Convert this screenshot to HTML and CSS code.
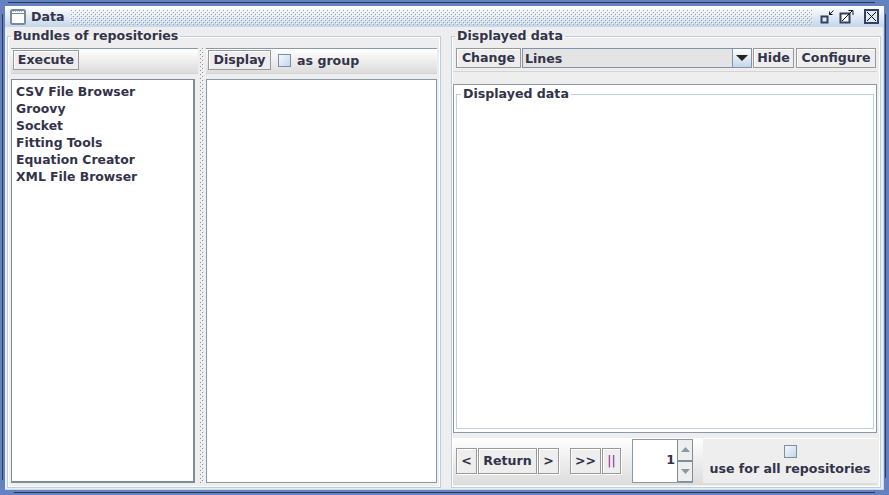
FILE: index.html
```html
<!DOCTYPE html>
<html lang="en">
<head>
<meta charset="utf-8">
<title>Data</title>
<link rel="stylesheet" href="styles.css">
</head>
<body>
<div class="frame">
  <div class="frame-inner">
    <header class="titlebar">
      <svg class="app-icon" width="16" height="16" viewBox="0 0 16 16">
        <rect x="1" y="1" width="14" height="14" rx="1.5" fill="#fff" stroke="#7b8a9a" stroke-width="2"/>
        <path d="M2 4.500h12" stroke="#7b8a9a" stroke-width="1"/>
        <path d="M3 2.500h10" stroke="#a9b6c4" stroke-width="1" stroke-dasharray="1 1"/>
      </svg>
      <span class="title-text">Data</span>
      <svg class="title-dots" height="16">
        <defs>
          <pattern id="bumps" width="4" height="4" patternUnits="userSpaceOnUse">
            <rect x="0" y="0" width="1" height="1" fill="#ffffff"/>
            <rect x="2" y="2" width="1" height="1" fill="#ffffff"/>
            <rect x="1" y="1" width="1" height="1" fill="#8fa5bd"/>
            <rect x="3" y="3" width="1" height="1" fill="#8fa5bd"/>
          </pattern>
        </defs>
        <rect width="100%" height="16" fill="url(#bumps)"/>
      </svg>
      <div class="title-buttons">
        <svg width="15" height="15" viewBox="0 0 15 15">
          <rect x="1.500" y="7.500" width="6" height="6" fill="#dfe8f2" stroke="#33415f" stroke-width="2"/>
          <path d="M13.500 1.500L9.500 5.500M9.500 2.500v3h3" fill="none" stroke="#111" stroke-width="1"/>
        </svg>
        <svg width="15" height="15" viewBox="0 0 15 15">
          <rect x="1.500" y="4.500" width="9" height="9" fill="#fff" stroke="#33415f" stroke-width="2"/>
          <path d="M3 12l10-10M9.500 1.500H14V6" fill="none" stroke="#111" stroke-width="1"/>
        </svg>
        <svg class="close" width="15" height="15" viewBox="0 0 15 15">
          <rect x="1" y="1" width="13" height="13" fill="#dfe8f2" stroke="#33415f" stroke-width="2"/>
          <path d="M3 3l9 9M12 3l-9 9" stroke="#111" stroke-width="1"/>
        </svg>
      </div>
    </header>
    <main class="content">
      <fieldset class="group group-left">
        <legend>Bundles of repositories</legend>
        <div class="split">
          <section class="col col-a">
            <div class="toolbar"><button class="btn btn-execute">Execute</button></div>
            <ul class="list">
              <li>CSV File Browser</li>
              <li>Groovy</li>
              <li>Socket</li>
              <li>Fitting Tools</li>
              <li>Equation Creator</li>
              <li>XML File Browser</li>
            </ul>
          </section>
          <svg class="divider" width="8" height="436">
            <defs>
              <pattern id="grip" width="4" height="4" patternUnits="userSpaceOnUse">
                <rect x="0" y="0" width="1" height="1" fill="#8594a6"/>
                <rect x="2" y="2" width="1" height="1" fill="#8594a6"/>
                <rect x="1" y="1" width="1" height="1" fill="#ffffff"/>
              </pattern>
            </defs>
            <rect x="2" y="0" width="4" height="436" fill="url(#grip)"/>
          </svg>
          <section class="col col-b">
            <div class="toolbar">
              <button class="btn btn-display">Display</button>
              <span class="check-row"><span class="check"></span>as group</span>
            </div>
            <div class="list list-plain"></div>
          </section>
        </div>
      </fieldset>
      <fieldset class="group group-right">
        <legend>Displayed data</legend>
        <div class="toolbar toolbar-right">
          <button class="btn btn-change">Change</button>
          <div class="combo">
            <span class="combo-text">Lines</span>
            <span class="combo-arrow"><svg width="12" height="7" viewBox="0 0 12 7"><path d="M0 0h12L6 6z" fill="#222"/></svg></span>
          </div>
          <button class="btn btn-hide">Hide</button>
          <button class="btn btn-config">Configure</button>
        </div>
        <div class="display">
          <fieldset class="group group-inner">
            <legend>Displayed data</legend>
          </fieldset>
        </div>
        <div class="controls">
          <button class="btn btn-tall btn-step">&lt;</button>
          <button class="btn btn-tall btn-return">Return</button>
          <button class="btn btn-tall btn-step">&gt;</button>
          <button class="btn btn-tall btn-skip">&gt;&gt;</button>
          <button class="btn btn-tall btn-pause">||</button>
          <div class="spinner">
            <span class="spin-value">1</span>
            <span class="spin-arrows">
              <span class="spin-btn"><svg width="9" height="5" viewBox="0 0 9 5"><path d="M4.500 0L9 5H0z" fill="#8a98a8"/></svg></span>
              <span class="spin-btn"><svg width="9" height="5" viewBox="0 0 9 5"><path d="M0 0h9L4.500 5z" fill="#8a98a8"/></svg></span>
            </span>
          </div>
          <div class="use-all">
            <span class="check"></span>
            <span>use for all repositories</span>
          </div>
        </div>
      </fieldset>
    </main>
  </div>
</div>
</body>
</html>
```
FILE: styles.css
```css
* { box-sizing: border-box; }
html, body { margin: 0; padding: 0; }
body {
  width: 889px;
  height: 495px;
  overflow: hidden;
  font-family: "DejaVu Sans", sans-serif;
  font-weight: 700;
  font-size: 12.4px;
  color: #33334a;
}
.frame {
  width: 889px;
  height: 495px;
  padding: 6px 5px 5px;
  background:
    linear-gradient(#2c3a55, #2c3a55) 8px 2px / 867px 1px no-repeat,
    linear-gradient(#2c3a55, #2c3a55) 14px 492px / 861px 1px no-repeat,
    linear-gradient(#2c3a55, #2c3a55) 2px 14px / 1px 466px no-repeat,
    linear-gradient(#2c3a55, #2c3a55) 885px 14px / 1px 464px no-repeat,
    #6382bf;
}
.frame-inner {
  height: 100%;
  display: flex;
  flex-direction: column;
}
.titlebar {
  height: 21px;
  flex: none;
  display: flex;
  align-items: center;
  padding: 0 5px;
  background: linear-gradient(#fff, #c4d6ea);
}
.app-icon { flex: none; }
.title-text { margin-left: 5px; font-size: 12.6px; }
.title-dots {
  flex: 1;
  min-width: 0;
  margin: 0 7px 0 6px;
}
.title-buttons { display: flex; gap: 4px; }
.title-buttons .close { margin-left: 6px; }
.content {
  flex: 1;
  min-height: 0;
  background: #eeeeee;
  display: flex;
  gap: 10px;
  padding: 2px 1px 1px 2px;
  border-right: 1px solid #c8d8ea;
  border-bottom: 1px solid #c8d8ea;
}
.group {
  margin: 0;
  min-width: 0;
  border: 1px solid #b8cfe5;
  box-shadow: inset 0 0 0 1px #fff;
  padding: 0;
  display: flex;
  flex-direction: column;
}
.group legend {
  margin-left: 0;
  padding: 0 2px;
  font-size: 12.6px;
  line-height: 14px;
}
.group-left { width: 434px; padding: 5px 3px 4px; }
.group-right { width: 430px; padding: 5px 3px 4px 1px; }
.group-right > legend { margin-left: 2px; }
.split { flex: 1; display: flex; min-height: 0; }
.col { display: flex; flex-direction: column; min-height: 0; }
.col-a { width: 187px; }
.col-b { width: 231px; }
.divider { flex: none; }
.toolbar {
  height: 26px;
  flex: none;
  display: flex;
  align-items: center;
  gap: 2px;
  padding: 0 2px 2px;
  border-top: 1px solid #8a99a8;
  border-bottom: 1px solid #d4d4d4;
  background: linear-gradient(#fff, #dcdcdc);
}
.btn {
  font: inherit;
  font-size: 12.6px;
  color: inherit;
  height: 20px;
  padding: 0;
  border: 1px solid #999;
  box-shadow: inset 1px 1px 0 #fff;
  background: #eeeeee;
  white-space: nowrap;
  line-height: 16px;
}
.btn-execute { width: 66px; }
.btn-display { width: 63px; }
.btn-change { width: 65px; }
.btn-hide { width: 41px; }
.btn-config { width: 80px; margin-left: 1px; }
.check-row { display: flex; align-items: center; margin-left: 5px; font-size: 12.6px; }
.check-row .check { margin-right: 6px; }
.check {
  display: block;
  width: 13px;
  height: 13px;
  flex: none;
  border: 1px solid #7d8ea0;
  background: linear-gradient(135deg, #f4f8fc, #c4d6ea);
}
.list {
  list-style: none;
  margin: 5px 3px 0 0;
  padding: 3px 4px;
  flex: 1;
  background: #fff;
  border-style: solid;
  border-color: #7f8c99;
  border-width: 1px 2px 2px 1px;
  font-size: 12.4px;
  line-height: 17px;
}
.list li { white-space: nowrap; }
.list-plain {
  margin: 5px 0 0;
  border-width: 1px;
  border-color: #8a99a8;
  padding: 0;
}
.toolbar-right {
  height: 24px;
  gap: 1px;
  padding: 0 0 3px 3px;
  border-top: 0;
  background: #eeeeee;
  width: 424px;
}
.combo {
  width: 230px;
  height: 20px;
  display: flex;
  align-items: center;
  border: 1px solid #7f93ad;
  background: #e4e4e4;
  font-size: 12.6px;
}
.combo-text { flex: 1; padding-left: 2px; }
.combo-arrow {
  width: 19px;
  height: 18px;
  display: flex;
  align-items: center;
  justify-content: center;
  border-left: 1px solid #7f93ad;
  background: linear-gradient(#fff, #c4d6ea);
}
.display {
  margin-top: 12px;
  width: 424px;
  height: 349px;
  flex: none;
  border: 1px solid #8a99a8;
  background: #fff;
  padding: 2px 2px 3px;
  display: flex;
}
.group-inner {
  flex: 1;
  background: #fff;
  box-shadow: none;
  border-color: #b8cfe5;
}
.group-inner legend { margin-left: 4px; }
.controls {
  margin-top: 5px;
  width: 424px;
  height: 47px;
  flex: none;
  display: flex;
  align-items: center;
  gap: 1px;
  padding: 1px 0 2px 3px;
  background: linear-gradient(#fff, #dcdcdc);
}
.btn-tall { height: 26px; box-shadow: inset 1px 1px 0 #fff, 1px 1px 0 #fff; }
.btn-step { width: 21px; }
.btn-return { width: 59px; }
.btn-skip { width: 31px; margin-left: 10px; }
.btn-pause { width: 19px; color: #8a2a8a; font-weight: 400; }
.spinner {
  width: 61px;
  height: 44px;
  margin-left: 10px;
  display: flex;
  background: #fff;
  border-top: 1px solid #8a99a8;
  border-left: 1px solid #8a99a8;
  border-bottom: 1px solid #8a99a8;
  font-size: 12.6px;
}
.spin-value { flex: 1; text-align: right; line-height: 40px; padding-right: 2px; }
.spin-arrows { width: 16px; display: flex; flex-direction: column; border: 1px solid #7f8c99; border-top: 0; border-bottom: 0; }
.spin-btn {
  flex: 1;
  display: flex;
  align-items: center;
  justify-content: center;
  background: #eeeeee;
  border-bottom: 1px solid #7f8c99;
}
.spin-btn:first-child { border-bottom-width: 2px; }
.use-all {
  width: 174px;
  height: 44px;
  margin-left: 9px;
  background: #eeeeee;
  display: flex;
  flex-direction: column;
  align-items: center;
  gap: 3px;
  padding-top: 6px;
  font-size: 12.6px;
  white-space: nowrap;
}
```
